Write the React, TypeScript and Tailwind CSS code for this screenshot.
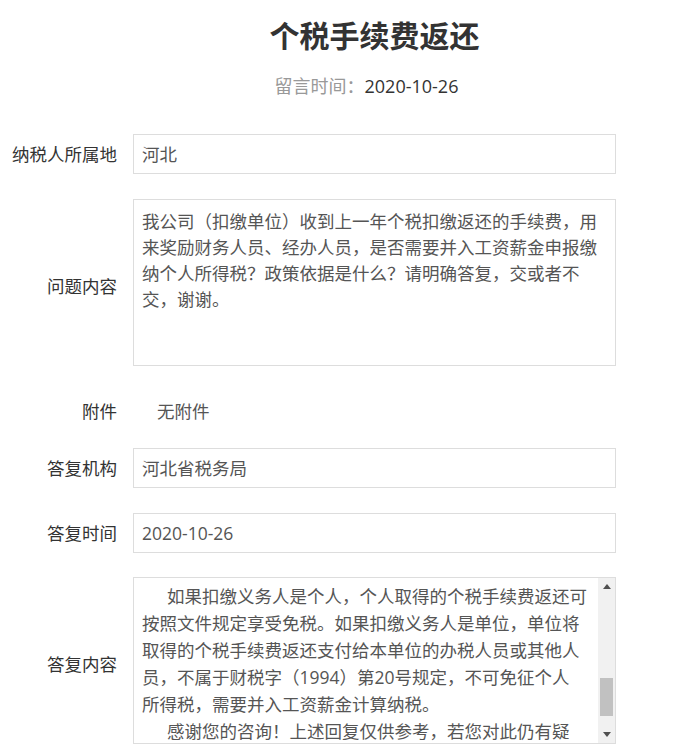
import React from 'react';

const font = { fontFamily: '"Open Sans", "Noto Sans CJK SC", sans-serif' };

const question = [
  '我公司（扣缴单位）收到上一年个税扣缴返还的手续费，用',
  '来奖励财务人员、经办人员，是否需要并入工资薪金申报缴',
  '纳个人所得税？政策依据是什么？请明确答复，交或者不',
  '交，谢谢。',
];

// [text, indented]
const answer: [string, boolean][] = [
  ['（三）个人所得税手续费返还的处理', true],
  ['如果扣缴义务人是个人，个人取得的个税手续费返还可', true],
  ['按照文件规定享受免税。如果扣缴义务人是单位，单位将', false],
  ['取得的个税手续费返还支付给本单位的办税人员或其他人', false],
  ['员，不属于财税字（1994）第20号规定，不可免征个人', false],
  ['所得税，需要并入工资薪金计算纳税。', false],
  ['感谢您的咨询！上述回复仅供参考，若您对此仍有疑', true],
  ['问，请联系主管税务机关。', false],
];

function Row({ label, children, tall }: { label: string; children: React.ReactNode; tall?: boolean }) {
  return (
    <div className="flex items-center">
      <div className={`w-[117px] shrink-0 text-right text-[17.5px] text-[#333] ${tall ? 'pt-[8px]' : ''}`}>{label}</div>
      <div className="ml-[16px] w-[483px]">{children}</div>
    </div>
  );
}

function Field({ value }: { value: string }) {
  return (
    <div className="h-[40px] border border-[#ddd] bg-white pl-[8px] flex items-center text-[17.5px] text-[#555]">
      {value}
    </div>
  );
}

export default function App() {
  return (
    <div className="w-[675px] min-h-[756px] bg-white" style={font}>
      <div className="ml-[133px] w-[483px] text-center">
        <div className="pt-[16px] text-[30px] leading-[40px] font-bold text-[#333]">个税手续费返还</div>
        <div className="mt-[18px] pr-[16px] text-[18px] leading-[24px]">
          <span className="text-[#999]">留言时间：</span>
          <span className="text-[#333]">2020-10-26</span>
        </div>
      </div>

      <div className="mt-[36px]">
        <Row label="纳税人所属地">
          <Field value="河北" />
        </Row>
      </div>

      <div className="mt-[25px]">
        <Row label="问题内容" tall>
          <div className="h-[167px] border border-[#ddd] bg-white pl-[8px] pt-[8px] text-[17.5px] leading-[26px] text-[#555]">
            {question.map((l) => (
              <div key={l} className="whitespace-nowrap">{l}</div>
            ))}
          </div>
        </Row>
      </div>

      <div className="mt-[25px]">
        <Row label="附件">
          <div className="h-[40px] pl-[24px] flex items-center text-[17.5px] text-[#555]">无附件</div>
        </Row>
      </div>

      <div className="mt-[17px]">
        <Row label="答复机构">
          <Field value="河北省税务局" />
        </Row>
      </div>

      <div className="mt-[25px]">
        <Row label="答复时间">
          <Field value="2020-10-26" />
        </Row>
      </div>

      <div className="mt-[24px]">
        <Row label="答复内容" tall>
          <div className="h-[167px] border border-[#ddd] bg-white flex">
            <div className="flex-1 overflow-hidden pl-[8px] text-[17.5px] leading-[27px] text-[#555]">
              <div className="-mt-[22px]">
                {answer.map(([l, ind], i) => (
                  <div key={i} className={`whitespace-nowrap ${ind ? 'pl-[25px]' : ''}`}>{l}</div>
                ))}
              </div>
            </div>
            <div className="w-[17px] bg-[#f1f1f1] flex flex-col items-center">
              <div className="h-[17px] flex items-center justify-center">
                <svg width="8" height="5" viewBox="0 0 8 5"><path d="M0 5L4 0L8 5Z" fill="#505050" /></svg>
              </div>
              <div className="flex-1 w-full px-[2px] flex flex-col">
                <div className="h-[83px]" />
                <div className="h-[38px] bg-[#c1c1c1]" />
              </div>
              <div className="h-[17px] flex items-center justify-center">
                <svg width="8" height="5" viewBox="0 0 8 5"><path d="M0 0L8 0L4 5Z" fill="#505050" /></svg>
              </div>
            </div>
          </div>
        </Row>
      </div>
    </div>
  );
}
